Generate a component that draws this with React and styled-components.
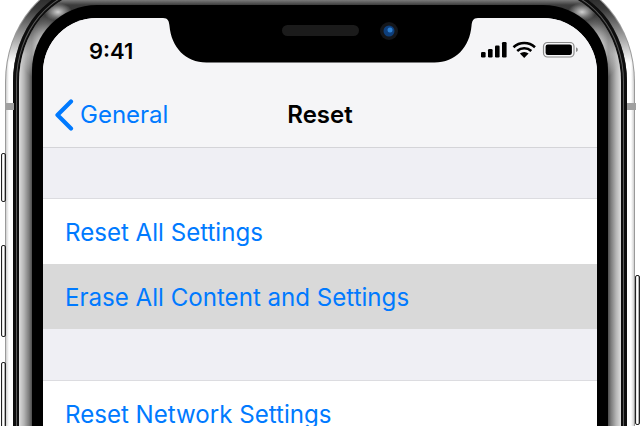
import React from "react";
import styled, { createGlobalStyle } from "styled-components";

const GlobalStyle = createGlobalStyle`
  html, body {
    margin: 0;
    background: #fff;
  }
`;

const Page = styled.div`
  position: relative;
  width: 640px;
  height: 426px;
  overflow: hidden;
  background: #fff;
  font-family: Inter, "Liberation Sans", sans-serif;
`;

// phone body, one ring inside the other
const Rail = styled.div`
  margin: -22px 5px 0;
  padding: 1px;
  border-radius: 88px / 104px;
  background: #9a9a9a;
`;

const Steel = styled.div`
  padding: 7px;
  border-radius: 87px / 103px;
  background:
    linear-gradient(180deg, #161616 0, #3a3a3a 30px, #9a9a9a 56px, rgba(255, 255, 255, 0) 84px),
    linear-gradient(90deg, #d0d0d0 0, #fff 3px, #fff calc(100% - 3px), #d0d0d0 100%);
`;

const Groove = styled.div`
  padding: 6px;
  border-radius: 80px / 96px;
  background: #5a5a5a;
  box-shadow: inset 0 0 0 3px #0e0e0e;
`;

const Chamfer = styled.div`
  padding: 13px;
  border-radius: 74px / 90px;
  box-shadow: 0 0 0 2px #0e0e0e;
  background:
    radial-gradient(ellipse 14px 9px at 39px 20px, #cfcfcf 0, rgba(210, 210, 210, 0) 100%),
    radial-gradient(ellipse 14px 9px at calc(100% - 39px) 20px, #cfcfcf 0, rgba(210, 210, 210, 0) 100%),
    radial-gradient(ellipse 26px 34px at 26px 56px, #f6f6f6 0, rgba(240, 240, 240, 0) 100%),
    radial-gradient(ellipse 26px 34px at calc(100% - 26px) 56px, #f6f6f6 0, rgba(240, 240, 240, 0) 100%),
    linear-gradient(180deg, #0c0c0c 0, #7a7a7a 8px, #3c3c3c 13px, #2a2a2a 32px, rgba(0, 0, 0, 0) 62px),
    linear-gradient(90deg, #dcdcdc 0, #b4b4b4 5px, #7c7c7c 10px, #4c4c4c 13px, #4c4c4c calc(100% - 13px), #7c7c7c calc(100% - 10px), #b4b4b4 calc(100% - 5px), #dcdcdc 100%);
`;

const Bezel = styled.div`
  padding: 13px 11px 11px;
  border-radius: 65px;
  background: #000;
`;

const Screen = styled.div`
  position: relative;
  min-height: 560px;
  border-radius: 54px 54px 0 0;
  overflow: hidden;
  background: #efeff4;
`;

const Notch = styled.svg`
  position: absolute;
  top: 0;
  left: 120px;
`;

const Header = styled.header`
  background: #f5f5f7;
  border-bottom: 1px solid #d4d4d8;
`;

const StatusBar = styled.div`
  display: flex;
  align-items: center;
  justify-content: space-between;
  height: 64px;
  padding: 0 18px 0 46px;
  box-sizing: border-box;
`;

const Time = styled.span`
  font-size: 22px;
  font-weight: 600;
  color: #000;
  line-height: 1;
  margin-top: 1px;
`;

const NavBar = styled.nav`
  display: grid;
  grid-template-columns: 1fr auto 1fr;
  align-items: center;
  height: 65px;
`;

const BackLink = styled.a`
  display: flex;
  align-items: center;
  gap: 6px;
  padding-left: 11px;
  font-size: 24px;
  color: #007aff;
`;

const Title = styled.span`
  font-size: 24px;
  font-weight: 600;
  color: #000;
`;

const Group = styled.section`
  margin-top: ${(p) => p.$gap}px;
  border-top: 1px solid #dcdce0;
`;

const Row = styled.div`
  display: flex;
  align-items: center;
  height: 65px;
  padding: 2px 0 0 22px;
  box-sizing: border-box;
  font-size: 24.1px;
  color: #007aff;
  background: ${(p) => (p.$selected ? "#d9d9d9" : "#fff")};
`;

const SideButton = styled.div`
  position: absolute;
  top: ${(p) => p.$top}px;
  height: ${(p) => p.$height}px;
  ${(p) => (p.$right ? "right: 0;" : "left: 1px;")}
  width: 3px;
  border: 1px solid #222;
  border-radius: 2px;
  background: linear-gradient(90deg, #dedede, #fff 50%, #8c8c8c);
`;

const Antenna = styled.div`
  position: absolute;
  top: 103px;
  ${(p) => (p.$right ? "right: 4px;" : "left: 5px;")}
  width: 9px;
  height: 7px;
  background: #a0a0a0;
`;

const BackIcon = () => (
  <svg width="20" height="32" viewBox="0 0 20 32">
    <path d="M17 2.500 3.500 16 17 29.500" fill="none" stroke="#007aff" strokeWidth="4.200" strokeLinecap="round" strokeLinejoin="round" />
  </svg>
);

const StatusIcons = () => (
  <svg width="98" height="18" viewBox="0 0 98 18">
    <rect x="0" y="11" width="4.600" height="5.500" rx="1.200" />
    <rect x="7" y="8" width="4.600" height="8.500" rx="1.200" />
    <rect x="14" y="4.500" width="4.600" height="12" rx="1.200" />
    <rect x="21" y="1" width="4.600" height="15.500" rx="1.200" />
    <path d="M32.500 6.200a16 16 0 0 1 21.500 0" fill="none" stroke="#000" strokeWidth="2.600" />
    <path d="M36.200 10a10.500 10.500 0 0 1 14.100 0" fill="none" stroke="#000" strokeWidth="2.600" />
    <path d="M43.200 17 38.900 12.600a6.400 6.400 0 0 1 8.700 0z" />
    <rect x="62.500" y="1.500" width="30.500" height="14.500" rx="4" fill="none" stroke="#8a8a8a" strokeWidth="1.200" />
    <rect x="64.600" y="3.500" width="26.300" height="10.500" rx="2.200" />
    <path d="M95 6.500c1.400.4 1.800 1.200 1.800 2.200s-.4 1.800-1.800 2.200z" fill="#8a8a8a" />
  </svg>
);

const App = () => {
  return (
    <Page>
      <GlobalStyle />
      <Rail>
        <Steel>
          <Groove>
            <Chamfer>
              <Bezel>
                <Screen>
                  <Header>
                    <StatusBar>
                      <Time>9:41</Time>
                      <StatusIcons />
                    </StatusBar>
                    <NavBar>
                      <BackLink>
                        <BackIcon />
                        General
                      </BackLink>
                      <Title>Reset</Title>
                    </NavBar>
                  </Header>
                  <Group $gap={50}>
                    <Row>Reset All Settings</Row>
                    <Row $selected>Erase All Content and Settings</Row>
                  </Group>
                  <Group $gap={51}>
                    <Row>Reset Network Settings</Row>
                  </Group>
                  <Notch width="315" height="45" viewBox="0 0 315 45">
                    <path d="M0 0h315c-5 0-6 3-6.500 8-1.800 21-16 36.500-37 36.500H43.500C22.500 44.500 8.300 29 6.500 8 6 3 5 0 0 0z" fill="#000" />
                    <rect x="119" y="7" width="77" height="11" rx="5.500" fill="#1b1b1b" />
                    <circle cx="226" cy="13" r="9" fill="#14161a" />
                    <circle cx="226" cy="13" r="5.500" fill="#0e3f7c" />
                    <circle cx="227" cy="12" r="2.500" fill="#2e7fd0" />
                  </Notch>
                </Screen>
              </Bezel>
            </Chamfer>
          </Groove>
        </Steel>
      </Rail>
      <Antenna />
      <Antenna $right />
      <SideButton $top={153} $height={47} />
      <SideButton $top={245} $height={90} />
      <SideButton $top={362} $height={90} />
      <SideButton $right $top={275} $height={148} />
    </Page>
  );
};

export default App;
